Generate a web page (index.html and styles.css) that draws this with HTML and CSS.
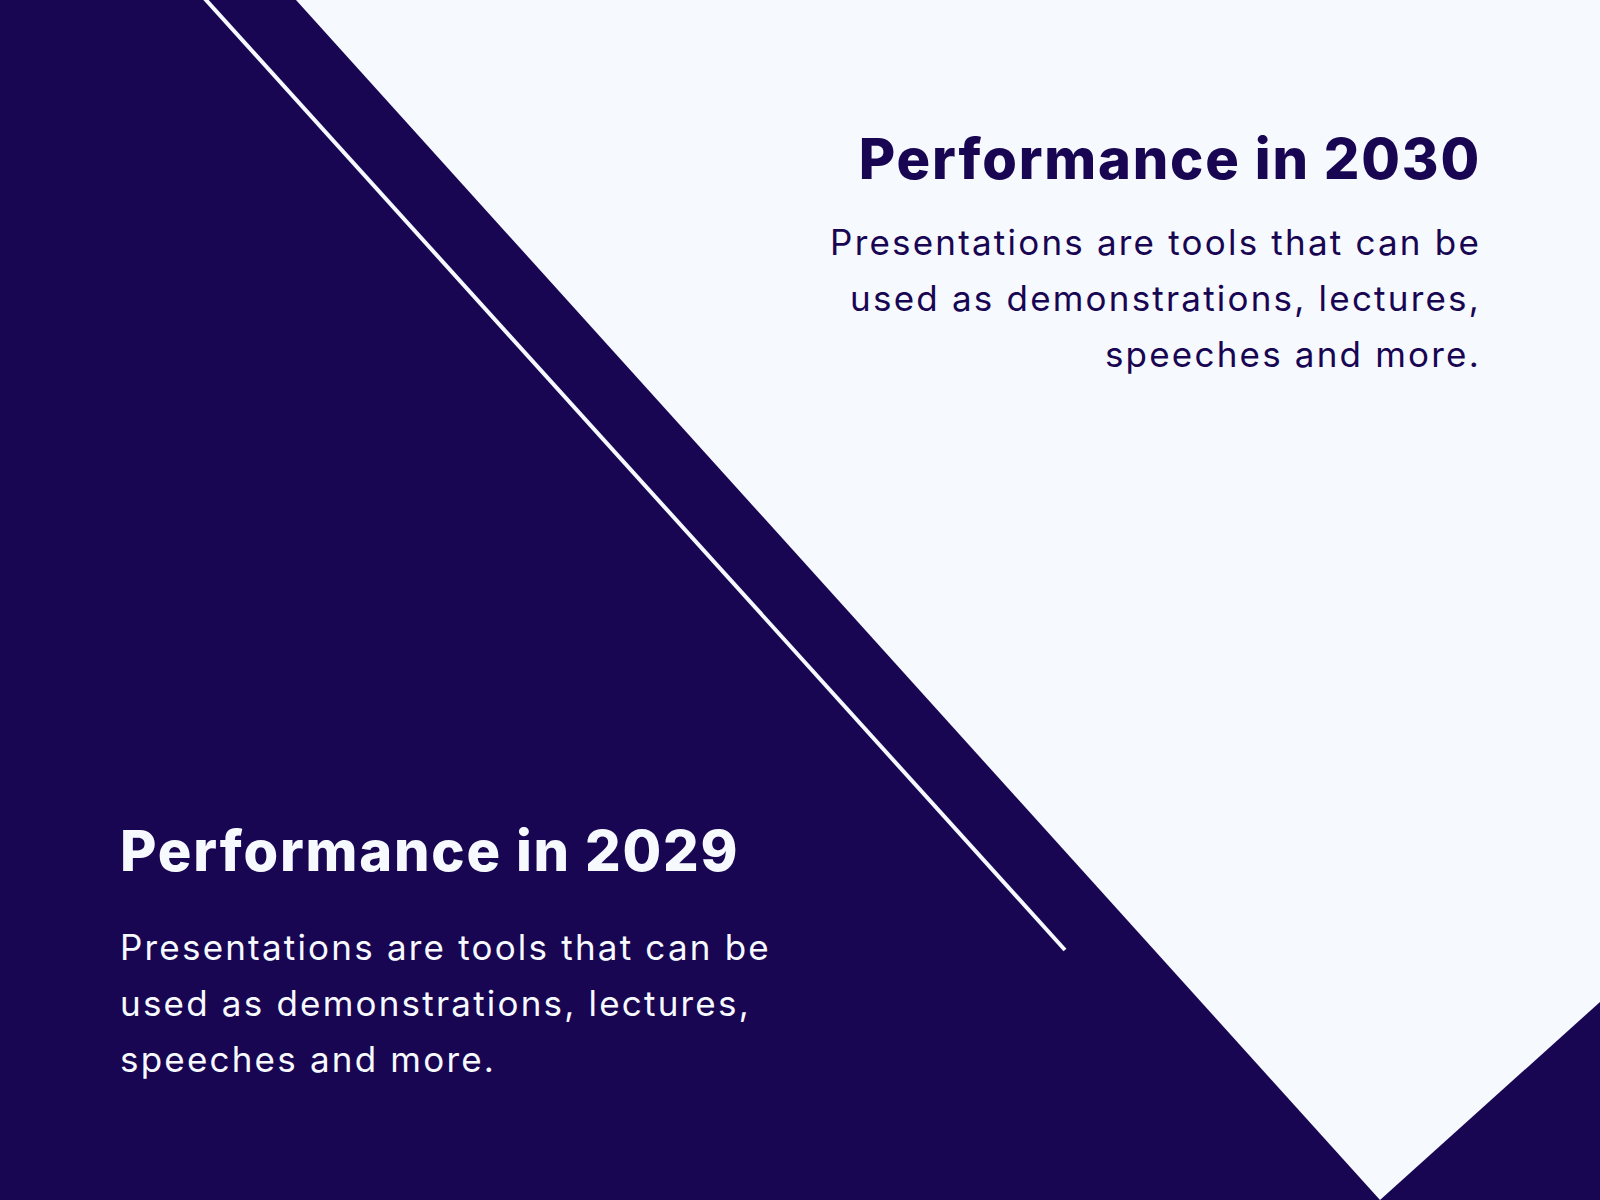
FILE: index.html
```html
<!DOCTYPE html>
<html lang="en">
<head>
<meta charset="utf-8">
<title>Performance</title>
<link rel="stylesheet" href="styles.css">
</head>
<body>
<div class="slide">
  <svg class="backdrop" viewBox="0 0 1600 1200" width="1600" height="1200" aria-hidden="true">
    <rect x="0" y="0" width="1600" height="1200" fill="#190653"/>
    <polygon points="296,0 1600,0 1600,1002 1380,1200" fill="#f6f9fd"/>
    <line x1="200.6" y1="-6" x2="1065" y2="950" stroke="#f6f9fd" stroke-width="4"/>
  </svg>
  <section class="block block-top">
    <h2 class="title title-dark">Performance in 2030</h2>
    <p class="copy copy-dark">Presentations are tools that can be<br>used as demonstrations, lectures,<br>speeches and more.</p>
  </section>
  <section class="block block-bottom">
    <h2 class="title title-light">Performance in 2029</h2>
    <p class="copy copy-light">Presentations are tools that can be<br>used as demonstrations, lectures,<br>speeches and more.</p>
  </section>
</div>
</body>
</html>
```
FILE: styles.css
```css
html, body {
  margin: 0;
  padding: 0;
  background: #190653;
}

.slide {
  position: relative;
  width: 1600px;
  height: 1200px;
  box-sizing: border-box;
  padding: 126px 119px 113px 120px;
  display: flex;
  flex-direction: column;
  justify-content: space-between;
  overflow: hidden;
  font-family: "Inter", "DejaVu Sans", sans-serif;
}

.backdrop {
  position: absolute;
  left: 0;
  top: 0;
  z-index: 0;
  display: block;
}

.block {
  position: relative;
  z-index: 1;
}

.block-top {
  align-self: flex-end;
  text-align: right;
}

.block-bottom {
  align-self: flex-start;
  text-align: left;
}

.title {
  margin: 0;
  font-size: 56px;
  line-height: 1.2;
  font-weight: 800;
  letter-spacing: 1.8px;
}

.block-top .title {
  margin-bottom: 21px;
}

.block-bottom .title {
  margin-bottom: 34px;
}

.copy {
  margin: 0;
  font-size: 35px;
  line-height: 56px;
  font-weight: 400;
  letter-spacing: 2.2px;
}

.title-dark, .copy-dark {
  color: #190653;
}

.title-light, .copy-light {
  color: #f6f9fd;
}
```
